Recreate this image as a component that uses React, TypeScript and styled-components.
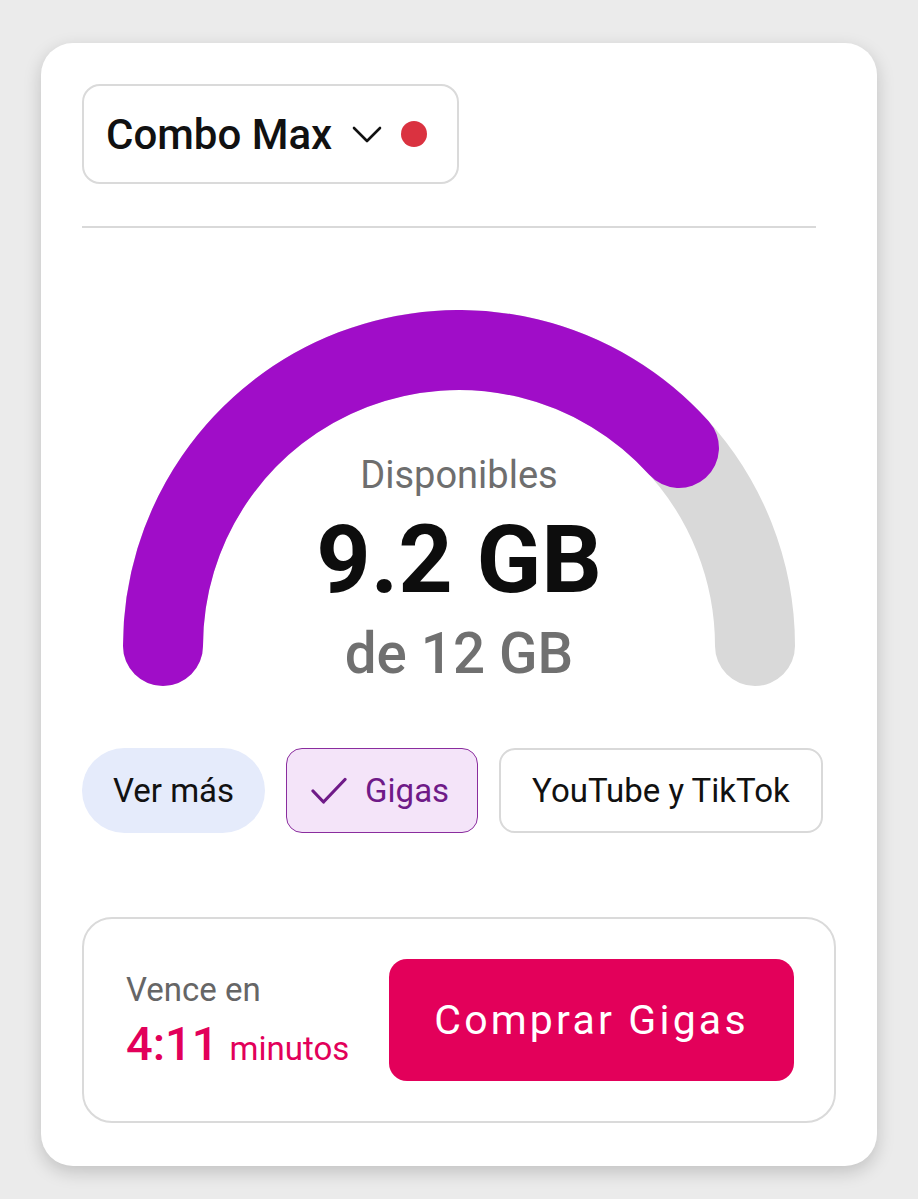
import React from "react";
import styled, { createGlobalStyle } from "styled-components";

const GlobalStyle = createGlobalStyle`
  html, body {
    margin: 0;
    padding: 0;
    background: #ebebeb;
    font-family: Roboto, "Liberation Sans", Arial, sans-serif;
  }
  * { box-sizing: border-box; }
`;

const Page = styled.div`
  padding: 43px 0 0 41px;
  min-height: 1199px;
`;

const Card = styled.div`
  width: 836px;
  background: #ffffff;
  border-radius: 32px;
  box-shadow: 0 6px 18px rgba(0, 0, 0, 0.18);
  padding: 41px 41px 43px 41px;
  display: flex;
  flex-direction: column;
`;

const Dropdown = styled.button`
  align-self: flex-start;
  display: flex;
  align-items: center;
  width: 377px;
  height: 100px;
  padding: 0 0 0 22px;
  border: 2px solid #dadada;
  border-radius: 18px;
  background: #fff;
  font-family: inherit;
  font-size: 42px;
  font-weight: 500;
  color: #111;
  cursor: pointer;
`;

const Chevron = styled.svg`
  margin-left: 20px;
  flex: none;
`;

const Dot = styled.span`
  width: 26px;
  height: 26px;
  border-radius: 50%;
  background: #da3240;
  margin-left: 19px;
  flex: none;
`;

const Divider = styled.hr`
  width: 734px;
  margin: 42px 0 0 0;
  border: none;
  height: 2px;
  background: #d9d9d9;
`;

const Gauge = styled.div`
  align-self: center;
  margin-top: 82px;
  display: grid;
  width: 676px;
  height: 378px;
  & > * {
    grid-area: 1 / 1;
  }
`;

const GaugeText = styled.div`
  display: flex;
  flex-direction: column;
  align-items: center;
  padding-top: 143px;
`;

const Label = styled.div`
  font-size: 38px;
  line-height: 44px;
  color: #6e6e6e;
`;

const Amount = styled.div`
  margin-top: 13px;
  font-size: 95px;
  line-height: 100px;
  font-weight: 700;
  color: #0d0d0d;
`;

const Total = styled.div`
  margin-top: 12px;
  font-size: 56.5px;
  line-height: 64px;
  font-weight: 500;
  color: #707070;
`;

const Chips = styled.div`
  display: flex;
  gap: 21px;
  margin-top: 60px;
`;

const Chip = styled.button<{ $variant: "soft" | "selected" | "outline" }>`
  display: flex;
  align-items: center;
  height: 85px;
  font-family: inherit;
  font-size: 33px;
  font-weight: 400;
  cursor: pointer;
  ${({ $variant }) =>
    $variant === "soft"
      ? `
    background: #e5ebfb;
    border: none;
    border-radius: 43px;
    padding: 0 31px;
    color: #111;
  `
      : $variant === "selected"
      ? `
    background: #f4e4f9;
    border: 1.5px solid #8a2d9e;
    border-radius: 16px;
    padding: 0 28px 0 24px;
    color: #6f1a88;
  `
      : `
    background: #fff;
    border: 2px solid #d9d9d9;
    border-radius: 16px;
    padding: 0 31px;
    color: #111;
  `}
`;

const Check = styled.svg`
  margin-right: 18px;
  flex: none;
`;

const Expiry = styled.div`
  margin-top: 84px;
  height: 206px;
  border: 2px solid #dadada;
  border-radius: 30px;
  display: flex;
  align-items: center;
  justify-content: space-between;
  padding: 0 40px 0 42px;
`;

const ExpiryInfo = styled.div`
  display: flex;
  flex-direction: column;
`;

const ExpiryLabel = styled.div`
  font-size: 33px;
  line-height: 40px;
  color: #666;
`;

const Countdown = styled.div`
  display: flex;
  align-items: baseline;
  gap: 11px;
  margin-top: 8px;
  color: #e2005a;
`;

const Time = styled.span`
  font-size: 47px;
  line-height: 52px;
  font-weight: 500;
`;

const Unit = styled.span`
  font-size: 33px;
`;

const BuyButton = styled.button`
  width: 405px;
  height: 122px;
  border: none;
  border-radius: 18px;
  background: #e3005a;
  color: #fff;
  font-family: inherit;
  font-size: 41px;
  font-weight: 400;
  letter-spacing: 3.2px;
  cursor: pointer;
`;

const R = 296;
const CX = 338;
const CY = 336;
const SW = 80;

function arcPath(fraction: number) {
  const angle = Math.PI - fraction * Math.PI;
  const x = CX + R * Math.cos(angle);
  const y = CY - R * Math.sin(angle);
  return `M ${CX - R} ${CY} A ${R} ${R} 0 0 1 ${x.toFixed(2)} ${y.toFixed(2)}`;
}

export default function App() {
  const used = 9.2;
  const total = 12;
  return (
    <>
      <GlobalStyle />
      <Page>
        <Card>
          <Dropdown>
            Combo Max
            <Chevron width="30" height="17" viewBox="0 0 30 17">
              <path d="M2 2 L15 15 L28 2" fill="none" stroke="#111" strokeWidth="2.6" strokeLinecap="round" strokeLinejoin="round" />
            </Chevron>
            <Dot />
          </Dropdown>
          <Divider />
          <Gauge>
            <svg width="676" height="378" viewBox="0 0 676 378">
              <path d={arcPath(1)} fill="none" stroke="#d9d9d9" strokeWidth={SW} strokeLinecap="round" />
              <path d={arcPath(used / total)} fill="none" stroke="#a00dc8" strokeWidth={SW} strokeLinecap="round" />
            </svg>
            <GaugeText>
              <Label>Disponibles</Label>
              <Amount>9.2 GB</Amount>
              <Total>de 12 GB</Total>
            </GaugeText>
          </Gauge>
          <Chips>
            <Chip $variant="soft">Ver más</Chip>
            <Chip $variant="selected">
              <Check width="36" height="28" viewBox="0 0 36 28">
                <path d="M2 14 L12.5 25 L34 2.5" fill="none" stroke="#6f1a88" strokeWidth="3.2" strokeLinecap="round" strokeLinejoin="round" />
              </Check>
              Gigas
            </Chip>
            <Chip $variant="outline">YouTube y TikTok</Chip>
          </Chips>
          <Expiry>
            <ExpiryInfo>
              <ExpiryLabel>Vence en</ExpiryLabel>
              <Countdown>
                <Time>4:11</Time>
                <Unit>minutos</Unit>
              </Countdown>
            </ExpiryInfo>
            <BuyButton>Comprar Gigas</BuyButton>
          </Expiry>
        </Card>
      </Page>
    </>
  );
}
